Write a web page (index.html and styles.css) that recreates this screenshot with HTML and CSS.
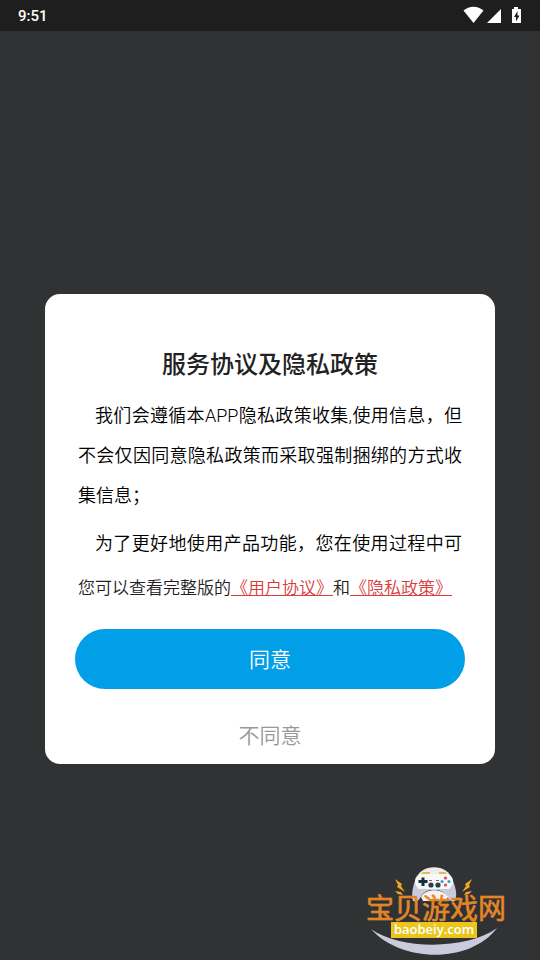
FILE: index.html
```
<!DOCTYPE html>
<html lang="zh-CN">
<head>
    <meta charset="UTF-8">
    <meta name="viewport" content="width=device-width, initial-scale=1.0">
    <title>服务协议及隐私政策</title>
    <link rel="stylesheet" href="styles.css">
</head>
<body>
<header class="status-bar">
    <span class="time">9:51</span>
    <svg class="status-icons" width="60" height="20" viewBox="0 0 60 20" fill="#fff" aria-hidden="true">
        <path d="M0.5 4.500C6-0.600 15-0.600 20.500 4.500L10.500 17z"/>
        <path d="M38 3v14H24z"/>
        <path fill-rule="evenodd" d="M51 1h4v2h3v14h-9V3h2zM54.500 5l-3.500 6h2v4.500l3.500-6h-2z"/>
    </svg>
</header>

<main class="screen">
    <section class="dialog" role="dialog" aria-labelledby="title">
        <h2 class="dialog-title" id="title">服务协议及隐私政策</h2>

        <div class="terms">
            <p>我们会遵循本APP隐私政策收集,使用信息，但不会仅因同意隐私政策而采取强制捆绑的方式收集信息；</p>
            <p class="full-line">为了更好地使用产品功能，您在使用过程中可</p>
        </div>

        <p class="links">您可以查看完整版的<a href="#">《用户协议》</a>和<a href="#">《隐私政策》</a></p>

        <button class="agree" type="button">同意</button>
        <button class="disagree" type="button">不同意</button>
    </section>
</main>

<!-- Site logo in the corner -->
<svg class="site-logo" width="150" height="94" viewBox="0 0 150 94" role="img" aria-label="宝贝游戏网 baobeiy.com">
    <!-- controller -->
    <path d="M55 14C58-3 88-3 91 14L92 24H54z" fill="#ededf0"/>
    <path d="M55 12C52 20 50 28 52 35C57 37 59 32 61 29C66 22 80 22 85 29C87 32 89 37 94 35C97 28 94 20 91 12L89 23H57z" fill="#c9cada"/>
    <rect x="54" y="8" width="38" height="15" rx="7" fill="#f7f7f8"/>
    <path d="M60 31C64 22 82 22 87 31L85 35H62z" fill="#f4f3f1"/>
    <path d="M60 8l2-2h7v2zM78 6h6l2 2h-8z" fill="#e8b850"/>
    <path d="M60.500 11.500h3v2.500h3v3h-3v3h-3v-3h-3v-3h3z" fill="#12303f"/>
    <g fill="#1f4255">
        <circle cx="70" cy="19" r="2.600"/><circle cx="77" cy="19" r="2.600"/>
    </g>
    <path d="M68 14h3v1h-3zM75 14h3v1h-3z" fill="#e03850"/>
    <g fill="#e04858">
        <circle cx="84.500" cy="12" r="1.600"/><circle cx="84.500" cy="19" r="1.600"/>
    </g>
    <g fill="#30a8bc">
        <circle cx="81" cy="15.500" r="1.600"/><circle cx="88" cy="15.500" r="1.600"/>
    </g>
    <!-- sparks -->
    <g fill="#f2a51e">
        <path d="M34 13l7 5-1 2 4 6-8-5 1-2zM34 25l6 1 2 3-5-1z"/>
        <path d="M111 13l-7 5 1 2-4 6 8-5-1-2zM111 25l-6 1-2 3 5-1z"/>
    </g>
    <!-- smile -->
    <path d="M10 63C39 84 106 84 136 62C109 98 40 97 10 63z" fill="#cbcbdc"/>
    <rect x="30" y="56" width="86" height="16" fill="#e9c51d"/>
    <text class="logo-url" x="73" y="68" text-anchor="middle">baobeiy.com</text>
    <text class="logo-name" x="5" y="53">宝贝游戏网</text>
</svg>
</body>
</html>
```

FILE: styles.css
```
* {
    box-sizing: border-box;
}

body {
    font-family: Roboto, "Noto Sans CJK SC", sans-serif;
    background-color: #313234;
    margin: 0;
    min-height: 100vh;
    position: relative;
}

.status-bar {
    display: flex;
    align-items: center;
    justify-content: space-between;
    height: 31px;
    padding: 0 17px 0 18px;
    background-color: #1e1e1e;
    color: #fff;
}

.time {
    font-size: 15px;
    font-weight: 500;
}

.screen {
    padding: 263px 45px 0;
}

.dialog {
    display: flex;
    flex-direction: column;
    padding: 51px 30px 8px;
    border-radius: 15px;
    background-color: #fff;
    color: #000;
    font-weight: 350;
}

.dialog-title {
    margin: 0;
    font-size: 24px;
    line-height: 40px;
    font-weight: 500;
    text-align: center;
    color: #222;
}

.terms {
    padding: 11px 3px 1px;
    font-size: 18px;
    line-height: 40px;
    text-align: justify;
}

.terms p {
    margin: 0 0 8px;
    text-indent: 17px;
}

.terms .full-line {
    text-align-last: justify;
}

.links {
    margin: 0;
    padding: 0 3px;
    font-size: 17px;
    line-height: 30px;
    color: #222;
}

.links a {
    color: #d93c3c;
    text-decoration: underline;
}

button {
    padding: 0 0 2px;
    border: none;
    font-family: inherit;
    font-size: 21px;
    font-weight: inherit;
    cursor: pointer;
}

.agree {
    height: 60px;
    margin-top: 26px;
    border-radius: 30px;
    background-color: #029fe9;
    color: #fff;
}

.disagree {
    height: 43px;
    margin-top: 24px;
    background: none;
    color: #999;
}

.site-logo {
    position: absolute;
    right: 29px;
    bottom: 0;
}

.logo-name {
    font-family: "Liberation Sans", "Noto Sans CJK SC", sans-serif;
    font-size: 28px;
    font-weight: 400;
    fill: #e88420;
    stroke: #e9a04c;
    stroke-width: 0.5px;
    paint-order: stroke;
}

.logo-url {
    font-family: "Open Sans", sans-serif;
    font-size: 13px;
    font-weight: 600;
    fill: #fff;
}
```
